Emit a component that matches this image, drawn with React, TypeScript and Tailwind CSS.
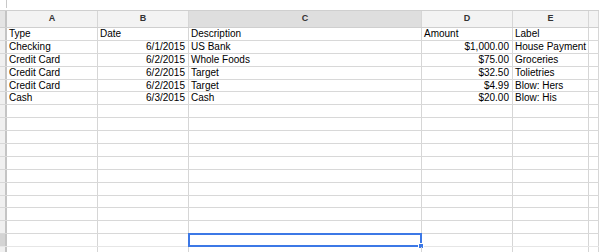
import React from 'react'

type Cell = { text: string; right?: boolean }

const columns = ['A', 'B', 'C', 'D', 'E', '']
const widths = ['w-[91px]', 'w-[91px]', 'w-[233px]', 'w-[91px]', 'w-[76px]', 'flex-1']

const data: Cell[][] = [
  [{ text: 'Type' }, { text: 'Date' }, { text: 'Description' }, { text: 'Amount' }, { text: 'Label' }],
  [{ text: 'Checking' }, { text: '6/1/2015', right: true }, { text: 'US Bank' }, { text: '$1,000.00', right: true }, { text: 'House Payment' }],
  [{ text: 'Credit Card' }, { text: '6/2/2015', right: true }, { text: 'Whole Foods' }, { text: '$75.00', right: true }, { text: 'Groceries' }],
  [{ text: 'Credit Card' }, { text: '6/2/2015', right: true }, { text: 'Target' }, { text: '$32.50', right: true }, { text: 'Tolietries' }],
  [{ text: 'Credit Card' }, { text: '6/2/2015', right: true }, { text: 'Target' }, { text: '$4.99', right: true }, { text: 'Blow: Hers' }],
  [{ text: 'Cash' }, { text: '6/3/2015', right: true }, { text: 'Cash' }, { text: '$20.00', right: true }, { text: 'Blow: His' }],
]

const ROWS = 18
const ACTIVE_ROW = 16
const ACTIVE_COL = 2

export default function App() {
  return (
    <div className="w-[599px] h-[252px] overflow-hidden bg-white text-black font-['Liberation_Sans',Arial,sans-serif]">
      {/* formula bar strip */}
      <div className="h-[10px] flex">
        <div className="w-[7px] h-[8px] border-r border-[#c8c8c8]" />
      </div>

      {/* column headers */}
      <div className="flex h-[18px] border-y border-[#cfcfcf] bg-[#f3f3f3]">
        <div className="w-[7px] shrink-0 bg-[#e4e4e4] border-r-2 border-[#c4c4c4]" />
        {columns.map((c, i) => (
          <div
            key={i}
            className={`${widths[i]} shrink-0 border-r border-[#d6d6d6] flex items-center justify-center text-[9px] font-bold text-[#333] ${
              i === ACTIVE_COL ? 'bg-[#dedede]' : ''
            }`}
          >
            {c}
          </div>
        ))}
      </div>

      {/* sheet body */}
      {Array.from({ length: ROWS }).map((_, r) => {
        const row = data[r] ?? []
        const active = r === ACTIVE_ROW
        return (
          <div key={r} className={`flex h-[12.9px] border-b ${active ? 'border-[#e6e6e6]' : 'border-[#d8d8d8]'}`}>
            <div className={`w-[7px] shrink-0 border-r-2 border-[#c4c4c4] ${active ? 'bg-[#d4d4d4]' : 'bg-[#f0f0f0]'}`} />
            {widths.map((w, c) => {
              const cell = row[c]
              const selected = active && c === ACTIVE_COL
              return (
                <div
                  key={c}
                  className={`${w} shrink-0 relative border-r border-[#d6d6d6] flex items-center text-[10px] leading-none whitespace-nowrap overflow-visible ${
                    cell?.right ? 'justify-end pr-[3px]' : 'pl-[2px]'
                  }`}
                >
                  {cell?.text}
                  {selected && (
                    <div className="absolute -left-px -top-px -right-px -bottom-px border-2 border-[#3c78e6]">
                      <div className="absolute -right-[4px] -bottom-[4px] w-[6px] h-[6px] bg-[#3c78e6] border border-white" />
                    </div>
                  )}
                </div>
              )
            })}
          </div>
        )
      })}
    </div>
  )
}
